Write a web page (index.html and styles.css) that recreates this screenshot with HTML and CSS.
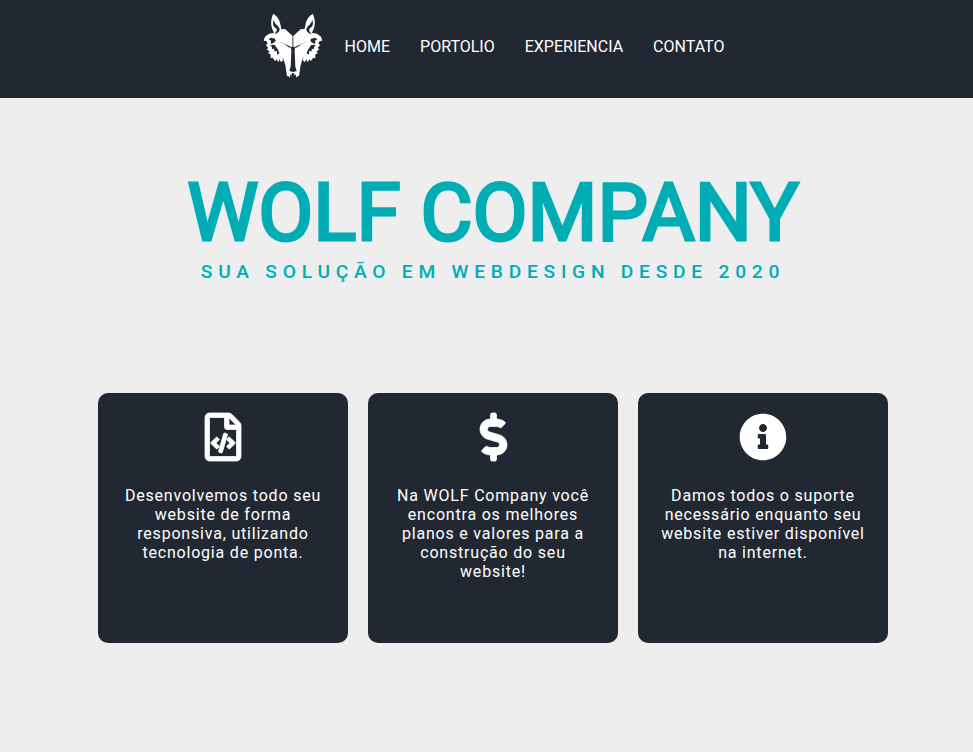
FILE: index.html
```html
<!DOCTYPE html>
<html lang="pt-BR">
<head>
<meta charset="utf-8">
<meta name="viewport" content="width=device-width, initial-scale=1">
<title>Wolf Company</title>
<link rel="stylesheet" href="styles.css">
</head>
<body>
<header class="header">
  <a class="logo" href="#" aria-label="Wolf Company">
    <svg viewBox="24 24 180 198" aria-hidden="true">
      <defs>
        <g id="half">
          <path fill="#fff" d="M55 26C65 33 74 43 76 58L79 72L91 73L114 94L114 205L110 204L110 212L106 208L104 218L100 213L96 214L91 180L83 155L84 166L79 172L73 163L71 172L64 163L61 169L53 158L47 160L47 148L39 145L44 140L35 133L40 129L33 120L38 115L34 108L26 107L30 95L42 86L58 83C47 69 45 45 55 26Z"/>
          <path fill="#222831" d="M56 44C52 58 55 65 64 70C67 75 65 81 58 87C70 85 76 78 73 69C69 61 59 58 56 44Z"/>
          <path fill="#222831" d="M41 103L48 98L60 101L62 108L54 115L47 116L48 107ZM68 109L74 110L88 117L101 127L108 128L109 138L107 185L103 198L114 201L114 125L109 126L94 119L79 112ZM45 121L50 124L51 132L58 131L58 139L66 138L66 149L73 145L79 158L69 134L60 121L52 119Z"/>
          <path fill="#222831" d="M113 94L115 94L115 127L113 127Z"/>
        </g>
      </defs>
      <use href="#half"/>
      <use href="#half" transform="matrix(-1 0 0 1 228 0)"/>
    </svg>
  </a>
  <nav class="nav" aria-label="Principal">
    <a href="#">HOME</a>
    <a href="#">PORTOLIO</a>
    <a href="#">EXPERIENCIA</a>
    <a href="#">CONTATO</a>
  </nav>
</header>
<main class="main">
  <section class="hero">
    <h1>WOLF COMPANY</h1>
    <p>SUA SOLUÇÃO EM WEBDESIGN DESDE 2020</p>
  </section>
  <section class="cards">
    <article class="card">
      <svg class="icon icon-bold" viewBox="0 0 384 512" aria-hidden="true"><path d="M149.9 349.1l-.2-.2-32.8-28.9 32.8-28.9c3.6-3.2 4-8.8.8-12.4l-.2-.2-17.4-18.6c-3.4-3.6-9-3.7-12.4-.4l-57.7 54.1c-3.7 3.5-3.7 9.4 0 12.8l57.7 54.1c1.6 1.5 3.8 2.4 6 2.4 2.4 0 4.8-1 6.4-2.8l17.4-18.6c3.3-3.5 3.1-9.1-.4-12.4zm220-251.2L286 14C277 5 264.8-.1 252.1-.1H48C21.5 0 0 21.5 0 48v416c0 26.5 21.5 48 48 48h288c26.5 0 48-21.5 48-48V131.9c0-12.7-5.1-25-14.1-34zM256 51.9l76.1 76.1H256zM336 464H48V48h160v104c0 13.3 10.7 24 24 24h104zM209.6 214c-4.7-1.4-9.5 1.3-10.9 6L144 408.1c-1.4 4.7 1.3 9.6 6 10.9l24.4 7.1c4.7 1.4 9.6-1.4 10.9-6L240 231.9c1.4-4.7-1.3-9.6-6-10.9zm24.5 76.9l.2.2 32.8 28.9-32.8 28.9c-3.6 3.2-4 8.8-.8 12.4l.2.2 17.4 18.6c3.3 3.5 8.9 3.7 12.4.4l57.7-54.1c3.7-3.5 3.7-9.4 0-12.8l-57.7-54.1c-3.5-3.3-9.1-3.2-12.4.4l-17.4 18.6c-3.3 3.5-3.1 9.1.4 12.4z"/></svg>
      <p>Desenvolvemos todo seu website de forma responsiva, utilizando tecnologia de ponta.</p>
    </article>
    <article class="card">
      <svg class="icon icon-bold" viewBox="0 0 288 512" aria-hidden="true"><path d="M209.2 233.4l-108-31.6C88.7 198.2 80 186.5 80 173.5c0-16.3 13.2-29.5 29.5-29.5h66.3c12.2 0 24.2 3.7 34.2 10.5 6.1 4.1 14.3 3.1 19.5-2l34.8-34c7.1-6.9 6.1-18.4-1.8-24.5C238 74.8 207.4 64.1 176 64V16c0-8.8-7.2-16-16-16h-32c-8.8 0-16 7.2-16 16v48h-2.5C45.8 64-5.4 118.7.5 183.6c4.2 46.1 39.4 83.6 83.8 96.6l102.5 30c12.5 3.7 21.2 15.3 21.2 28.3 0 16.3-13.2 29.5-29.5 29.5h-66.3C100 368 88 364.3 78 357.5c-6.1-4.1-14.3-3.1-19.5 2l-34.8 34c-7.1 6.9-6.1 18.4 1.8 24.5 24.5 19.2 55.1 29.9 86.5 30v48c0 8.8 7.2 16 16 16h32c8.8 0 16-7.2 16-16v-48.2c46.6-.9 90.3-28.6 105.7-72.7 21.5-61.6-14.6-124.8-72.5-141.7z"/></svg>
      <p>Na WOLF Company você encontra os melhores planos e valores para a construção do seu website!</p>
    </article>
    <article class="card">
      <svg class="icon" viewBox="0 0 512 512" aria-hidden="true"><path d="M256 8C119.043 8 8 119.083 8 256c0 136.997 111.043 248 248 248s248-111.003 248-248C504 119.083 392.957 8 256 8zm0 110c23.196 0 42 18.804 42 42s-18.804 42-42 42-42-18.804-42-42 18.804-42 42-42zm56 254c0 6.627-5.373 12-12 12h-88c-6.627 0-12-5.373-12-12v-24c0-6.627 5.373-12 12-12h12v-64h-12c-6.627 0-12-5.373-12-12v-24c0-6.627 5.373-12 12-12h64c6.627 0 12 5.373 12 12v100h12c6.627 0 12 5.373 12 12v24z"/></svg>
      <p>Damos todos o suporte necessário enquanto seu website estiver disponível na internet.</p>
    </article>
  </section>
</main>
</body>
</html>
```
FILE: styles.css
```css
* { box-sizing: border-box; margin: 0; padding: 0; }
body {
  background: #eee;
  color: #fff;
  font-family: Roboto, "Liberation Sans", sans-serif;
  font-size: 16px;
}
.header {
  display: flex;
  justify-content: center;
  align-items: flex-start;
  padding: 13px 0 19px 14px;
  background: #222831;
}
.logo { display: block; margin-right: 22px; }
.logo svg { display: block; width: 60px; height: 66px; }
.nav { display: flex; gap: 30px; padding-top: 24px; }
.nav a { color: #fff; text-decoration: none; line-height: 19px; }
.main { padding-left: 13px; }
.hero {
  padding: 67px 0 110px;
  color: #00adb5;
  text-align: center;
}
.hero h1 { font-size: 80px; font-weight: 400; line-height: 96px; -webkit-text-stroke: 3px #00adb5; }
.hero p { font-size: 1.2em; font-weight: 500; line-height: 22px; letter-spacing: 0.3em; }
.cards { display: flex; flex-wrap: wrap; justify-content: center; gap: 20px; }
.card {
  width: 250px;
  min-height: 250px;
  padding: 20px;
  border-radius: 10px;
  background: #222831;
  text-align: center;
}
.icon { display: block; height: 48px; margin: 0 auto 25px; fill: #fff; overflow: visible; }
.icon-bold { stroke: #fff; stroke-width: 8px; }
.card p { line-height: 19px; letter-spacing: 0.05em; }
```
